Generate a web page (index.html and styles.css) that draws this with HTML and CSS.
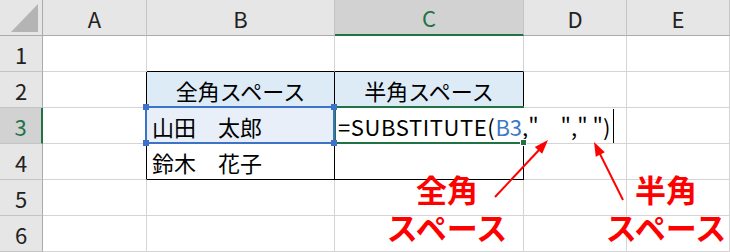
FILE: index.html
```html
<!DOCTYPE html>
<html lang="ja">
<head>
    <meta charset="UTF-8">
    <title>SUBSTITUTE</title>
    <link rel="stylesheet" href="styles.css">
</head>
<body>
    <div class="sheet">
        <div class="cell corner">
            <svg width="28" height="28" viewBox="0 0 28 28"><polygon points="27,0 27,28 0,28" fill="#b4b4b4"/></svg>
        </div>
        <div class="cell col-head">A</div>
        <div class="cell col-head">B</div>
        <div class="cell col-head active">C</div>
        <div class="cell col-head">D</div>
        <div class="cell col-head">E</div>

        <div class="cell row-head">1</div>
        <div class="cell"></div>
        <div class="cell bb-dark"></div>
        <div class="cell bb-dark"></div>
        <div class="cell"></div>
        <div class="cell"></div>

        <div class="cell row-head">2</div>
        <div class="cell br-dark"></div>
        <div class="cell title br-dark">全角スペース</div>
        <div class="cell title br-dark">半角スペース</div>
        <div class="cell"></div>
        <div class="cell"></div>

        <div class="cell row-head active">3</div>
        <div class="cell br-dark"></div>
        <div class="cell text picked">山田　太郎</div>
        <div class="cell text editing"><span class="formula"><span class="fn">=SUBSTITUTE(</span><span class="ref">B3</span>,"　"," ")</span><span class="caret"></span></div>
        <div class="cell"></div>
        <div class="cell"></div>

        <div class="cell row-head">4</div>
        <div class="cell br-dark"></div>
        <div class="cell text br-dark bb-dark">鈴木　花子</div>
        <div class="cell br-dark bb-dark"></div>
        <div class="cell"></div>
        <div class="cell"></div>

        <div class="cell row-head">5</div>
        <div class="cell"></div>
        <div class="cell"></div>
        <div class="cell"></div>
        <div class="cell"></div>
        <div class="cell"></div>

        <div class="cell row-head">6</div>
        <div class="cell"></div>
        <div class="cell"></div>
        <div class="cell"></div>
        <div class="cell"></div>
        <div class="cell"></div>

        <!-- 編集中のセルと参照範囲 -->
        <div class="active-box"><span class="grip"></span></div>
        <div class="ref-box">
            <span class="dot tl"></span><span class="dot tr"></span>
            <span class="dot bl"></span><span class="dot br"></span>
        </div>

        <svg class="arrows" width="730" height="252" viewBox="0 0 730 252">
            <line x1="495" y1="197" x2="539" y2="150" stroke="#ff0000" stroke-width="2"/>
            <polygon points="548,140 542.2,153.7 534.8,146.9" fill="#ff0000"/>
            <line x1="623" y1="200" x2="600" y2="154" stroke="#ff0000" stroke-width="2"/>
            <polygon points="594,142 604.8,152.3 595.8,156.7" fill="#ff0000"/>
        </svg>

        <div class="note note-full">全角<br>スペース</div>
        <div class="note note-half">半角<br>スペース</div>
    </div>
</body>
</html>
```

FILE: styles.css
```css
body {
    margin: 0;
    background: #fff;
    font-family: 'Noto Sans CJK JP', sans-serif;
    color: #000;
}

.sheet {
    position: relative;
    width: 730px;
    height: 252px;
    overflow: hidden;
    display: grid;
    grid-template-columns: 43px 104px 188px 189px 103px 1fr;
    grid-template-rows: repeat(7, 36px);
}

.cell {
    box-sizing: border-box;
    border-right: 1px solid #d4d4d4;
    border-bottom: 1px solid #d4d4d4;
    font-size: 22px;
    display: flex;
    align-items: center;
    min-width: 0;
}

.corner {
    background: #e6e6e6;
    border-right-color: #ababab;
    border-bottom-color: #ababab;
    justify-content: flex-end;
    align-items: flex-end;
    padding: 0 3px 3px 0;
}

.corner svg {
    display: block;
}

.col-head {
    background: #e6e6e6;
    border-right-color: #c4c4c4;
    border-bottom-color: #ababab;
    justify-content: center;
    color: #222;
}

.col-head.active {
    background: #d2d2d2;
    color: #217346;
    border-bottom: 2px solid #217346;
}

.row-head {
    background: #e6e6e6;
    border-right-color: #ababab;
    border-bottom-color: #c4c4c4;
    justify-content: center;
    color: #222;
}

.row-head.active {
    background: #d2d2d2;
    color: #217346;
    border-right: 2px solid #217346;
}

.bb-dark {
    border-bottom-color: #000;
}

.br-dark {
    border-right-color: #000;
}

.title {
    background: #ddebf7;
    justify-content: center;
    border-bottom-color: #000;
}

.text {
    padding-left: 5px;
}

.picked {
    background: #e8eff9;
    border-right-color: #000;
}

.editing {
    background: #fff;
    border-right-color: transparent;
    white-space: nowrap;
    overflow: visible;
    padding-left: 3px;
    position: relative;
    z-index: 1;
}

.formula {
    flex-shrink: 0;
}

.fn {
    letter-spacing: 0.6px;
}

.ref {
    color: #3c78c8;
}

.caret {
    flex-shrink: 0;
    width: 1px;
    height: 34px;
    background: #000;
    margin-left: 3px;
}

.active-box {
    position: absolute;
    left: 334px;
    top: 106px;
    width: 190px;
    height: 38px;
    box-sizing: border-box;
    border: 2px solid #217346;
    border-right: none;
    z-index: 2;
}

.grip {
    position: absolute;
    right: -3px;
    bottom: -4px;
    width: 5px;
    height: 5px;
    background: #217346;
    border: 1px solid #fff;
}

.ref-box {
    position: absolute;
    left: 145px;
    top: 106px;
    width: 190px;
    height: 38px;
    box-sizing: border-box;
    border: 2px solid #3c73c8;
    z-index: 3;
}

.dot {
    position: absolute;
    width: 6px;
    height: 6px;
    background: #3c73c8;
}

.dot.tl { left: -4px; top: -4px; }
.dot.tr { right: -4px; top: -4px; }
.dot.bl { left: -4px; bottom: -4px; }
.dot.br { right: -4px; bottom: -4px; }

.arrows {
    position: absolute;
    left: 0;
    top: 0;
    pointer-events: none;
    z-index: 4;
}

.note {
    position: absolute;
    width: 140px;
    text-align: center;
    color: #ff0000;
    font-family: 'Liberation Sans', 'Noto Sans CJK JP', sans-serif;
    font-weight: 700;
    font-size: 31px;
    line-height: 38px;
    z-index: 4;
}

.note-full {
    left: 377px;
    top: 173px;
}

.note-half {
    left: 596px;
    top: 173px;
}
```
